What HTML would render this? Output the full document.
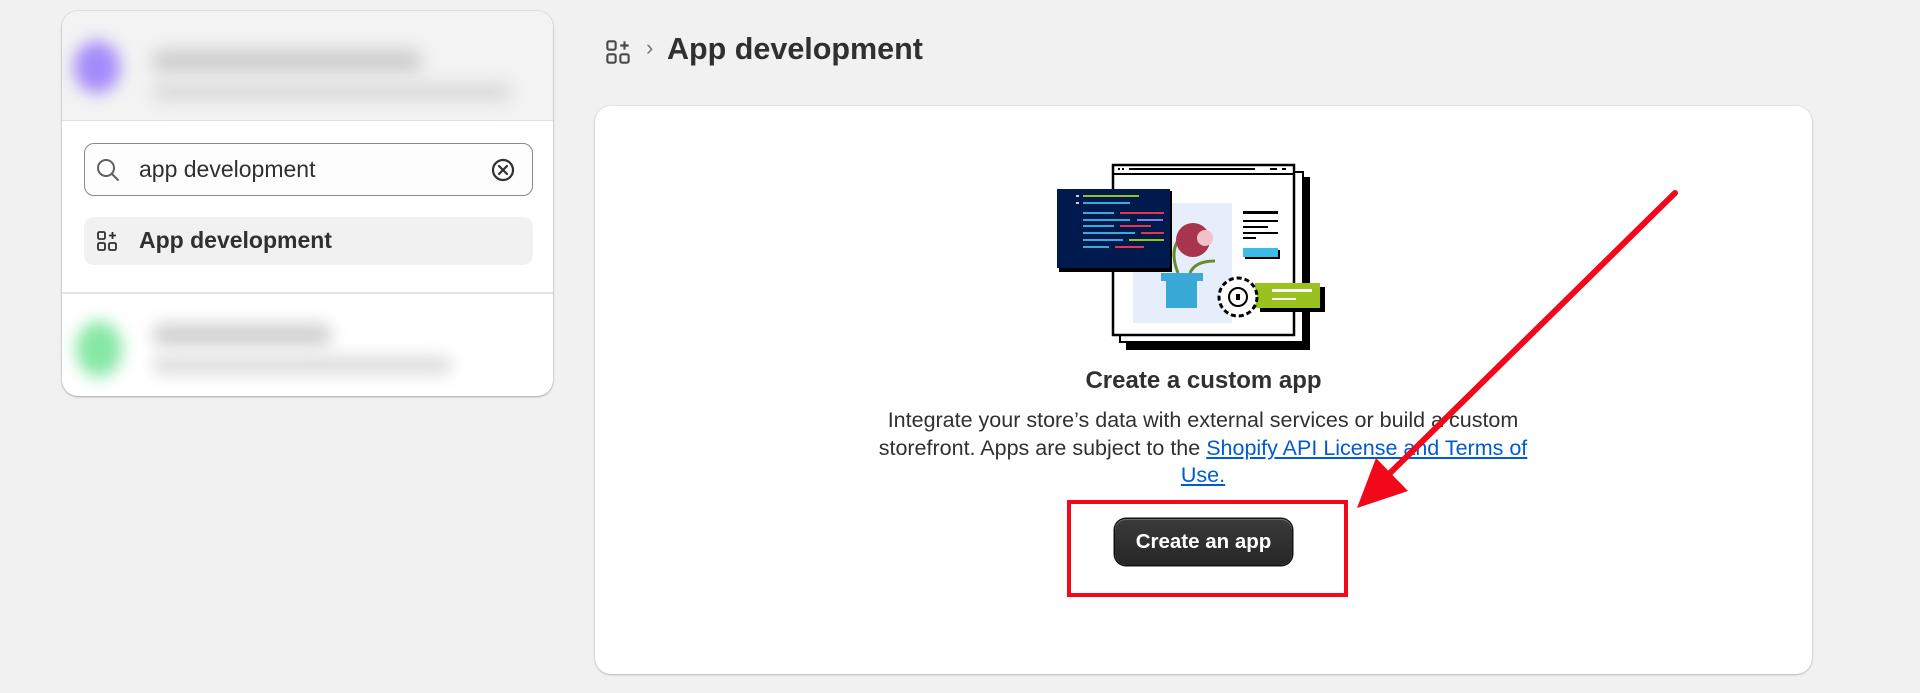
<!DOCTYPE html>
<html><head><meta charset="utf-8"><style>
*{box-sizing:border-box;margin:0;padding:0}
body{width:1920px;height:693px;background:#f1f1f1;font-family:"Liberation Sans",sans-serif;color:#303030;position:relative;overflow:hidden}
.abs{position:absolute}
.panel{left:62px;top:11px;width:491px;height:385px;background:#fff;border-radius:16px;box-shadow:0 1px 2px rgba(0,0,0,.25),0 0 0 1px #e3e3e3;overflow:hidden}
.blur{filter:blur(8px)}
.card{left:595px;top:106px;width:1217px;height:568px;background:#fff;border-radius:16px;box-shadow:0 1px 2px rgba(0,0,0,.2),0 0 0 1px #e6e6e6}
</style></head><body>
<div class="abs panel">
  <div class="abs" style="left:0;top:0;width:491px;height:110px;background:#f3f3f3;border-bottom:1px solid #e3e3e3"></div>
  <div class="abs blur" style="left:12px;top:30px;width:46px;height:52px;border-radius:50%;background:#a48bfb"></div>
  <div class="abs blur" style="left:90px;top:38px;width:270px;height:24px;border-radius:12px;background:#cfcfcf"></div>
  <div class="abs blur" style="left:90px;top:72px;width:360px;height:18px;border-radius:9px;background:#dadada"></div>
  <div class="abs" style="left:22px;top:132px;width:449px;height:53px;border:1px solid #8a8a8a;border-radius:10px;background:#fdfdfd"></div>
  <svg class="abs" style="left:33px;top:146px" width="26" height="26" viewBox="0 0 26 26"><circle cx="11" cy="11" r="8" fill="none" stroke="#616161" stroke-width="2"/><path d="M17 17l6 6" stroke="#616161" stroke-width="2" stroke-linecap="round"/></svg>
  <div class="abs" style="left:77px;top:145px;font-size:23px;color:#303030">app development</div>
  <svg class="abs" style="left:428px;top:146px" width="26" height="26" viewBox="0 0 26 26"><circle cx="13" cy="13" r="10" fill="none" stroke="#303030" stroke-width="2.2"/><path d="M9 9l8 8M17 9l-8 8" stroke="#303030" stroke-width="2.2" stroke-linecap="round"/></svg>
  <div class="abs" style="left:22px;top:206px;width:449px;height:48px;border-radius:10px;background:#f1f1f1"></div>
  <svg class="abs" style="left:34px;top:219px" width="22" height="22" viewBox="0 0 22 22"><g fill="none" stroke="#303030" stroke-width="1.8"><rect x="2" y="2" width="7" height="7" rx="1.5"/><rect x="2" y="13" width="7" height="7" rx="1.5"/><rect x="13" y="13" width="7" height="7" rx="1.5"/><path d="M16.5 2v7M13 5.5h7"/></g></svg>
  <div class="abs" style="left:77px;top:216px;font-size:23px;font-weight:bold;color:#303030">App development</div>
  <div class="abs" style="left:0;top:281px;width:491px;height:2px;background:#e3e3e3"></div>
  <div class="abs blur" style="left:14px;top:310px;width:46px;height:56px;border-radius:50%;background:#86e8a6"></div>
  <div class="abs blur" style="left:90px;top:312px;width:180px;height:24px;border-radius:12px;background:#d2d2d2"></div>
  <div class="abs blur" style="left:90px;top:345px;width:300px;height:18px;border-radius:9px;background:#dcdcdc"></div>
</div>

<svg class="abs" style="left:605px;top:39px" width="26" height="26" viewBox="0 0 22 22"><g fill="none" stroke="#4a4a4a" stroke-width="1.8"><rect x="2" y="2" width="7" height="7" rx="1.5"/><rect x="2" y="13" width="7" height="7" rx="1.5"/><rect x="13" y="13" width="7" height="7" rx="1.5"/><path d="M16.5 2v7M13 5.5h7"/></g></svg>
<div class="abs" style="left:646px;top:35px;font-size:22px;color:#777">›</div>
<div class="abs" style="left:667px;top:32px;font-size:30.5px;font-weight:bold;color:#303030">App development</div>

<div class="abs card"></div>

<svg class="abs" style="left:1055px;top:163px" width="272" height="190" viewBox="0 0 272 190">
  <rect x="71" y="14" width="184" height="173" fill="#000"/>
  <rect x="65" y="9" width="183" height="170" fill="#fff" stroke="#000" stroke-width="2"/>
  <rect x="58" y="2" width="181" height="170" fill="#fff" stroke="#000" stroke-width="2.5"/>
  <path d="M58 11h181" stroke="#000" stroke-width="2"/>
  <rect x="63" y="5" width="2" height="2" fill="#000"/><rect x="67" y="5" width="2" height="2" fill="#000"/><rect x="74" y="5" width="126" height="2" fill="#000"/><rect x="215" y="5" width="7" height="2" fill="#000"/><rect x="227" y="5" width="4" height="2" fill="#000"/>
  <rect x="78" y="40" width="99" height="120" fill="#e6eefb"/>
  <rect x="188" y="48" width="35" height="3" fill="#000"/><rect x="188" y="57" width="35" height="2" fill="#000"/><rect x="188" y="63" width="25" height="2" fill="#000"/><rect x="188" y="69" width="35" height="2" fill="#000"/><rect x="188" y="74" width="13" height="2" fill="#000"/>
  <rect x="190" y="87" width="35" height="9" fill="#000"/><rect x="188" y="85" width="35" height="9" fill="#3dbbe8"/>
  <rect x="4" y="28" width="113" height="81" fill="#000"/>
  <rect x="2" y="26" width="113" height="79" fill="#001a4d"/>
  <g transform="translate(-37,-8)">
  <rect x="58" y="40" width="3" height="2" fill="#ccc"/><rect x="58" y="47" width="3" height="2" fill="#ccc"/>
  <rect x="65" y="40" width="56" height="2" fill="#99c21f"/><rect x="65" y="47" width="47" height="2" fill="#3da8dc"/>
  <rect x="65" y="57" width="31" height="2" fill="#3da8dc"/><rect x="102" y="57" width="44" height="2" fill="#e8344d"/>
  <rect x="65" y="64" width="47" height="2" fill="#3da8dc"/><rect x="119" y="64" width="26" height="2" fill="#8b7ee0"/>
  <rect x="65" y="70" width="31" height="2" fill="#3da8dc"/><rect x="102" y="70" width="31" height="2" fill="#e8344d"/>
  <rect x="65" y="77" width="52" height="2" fill="#3da8dc"/><rect x="123" y="77" width="23" height="2" fill="#e8344d"/>
  <rect x="65" y="84" width="40" height="2" fill="#3da8dc"/><rect x="111" y="84" width="35" height="2" fill="#99c21f"/>
  <rect x="65" y="91" width="26" height="2" fill="#3da8dc"/><rect x="97" y="91" width="29" height="2" fill="#e8344d"/>
  </g>
  <path d="M123 110 q-10 -25 5 -38 M135 110 q5 -12 25 -12" stroke="#6a8a2a" stroke-width="3" fill="none"/>
  <circle cx="138" cy="77" r="17" fill="#a8344d"/><circle cx="150" cy="75" r="8" fill="#f2c0c6"/>
  <rect x="106" y="110" width="42" height="8" fill="#3da8dc"/><rect x="111" y="118" width="31" height="27" fill="#38a9d6"/>
  <rect x="205" y="124" width="65" height="25" fill="#000"/><rect x="200" y="120" width="65" height="25" fill="#99c21f"/>
  <rect x="217" y="126" width="40" height="3" fill="#fff"/><rect x="217" y="135" width="24" height="2" fill="#fff"/>
  <circle cx="183" cy="134" r="19" fill="#fff" stroke="#000" stroke-width="3" stroke-dasharray="5 3"/><circle cx="183" cy="134" r="9" fill="#fff" stroke="#000" stroke-width="2"/><rect x="181" y="131" width="4" height="6" fill="#000"/>
</svg>

<div class="abs" style="left:595px;width:1217px;top:367px;text-align:center;font-size:24px;font-weight:bold;color:#303030">Create a custom app</div>
<div class="abs" style="left:868px;width:670px;top:407px;text-align:center;font-size:21.5px;line-height:27.5px;color:#303030">Integrate your store’s data with external services or build a custom storefront. Apps are subject to the <span style="color:#005bd3;text-decoration:underline">Shopify API License and Terms of Use.</span></div>

<div class="abs" style="left:1115px;top:519px;width:177px;height:46px;border-radius:11px;background:linear-gradient(#3a3a3a,#262626);box-shadow:0 0 0 1.5px #111,inset 0 1px 0 rgba(255,255,255,.25);color:#fff;font-size:20.5px;font-weight:bold;text-align:center;line-height:46px">Create an app</div>

<div class="abs" style="left:1067px;top:500px;width:281px;height:97px;border:4px solid #f2071b"></div>
<svg class="abs" style="left:0;top:0" width="1920" height="693"><path d="M1675 193 L1385 478" stroke="#f2071b" stroke-width="6" stroke-linecap="round"/><path d="M1357 508 L1376 458 L1408 491 Z" fill="#f2071b"/></svg>
</body></html>
